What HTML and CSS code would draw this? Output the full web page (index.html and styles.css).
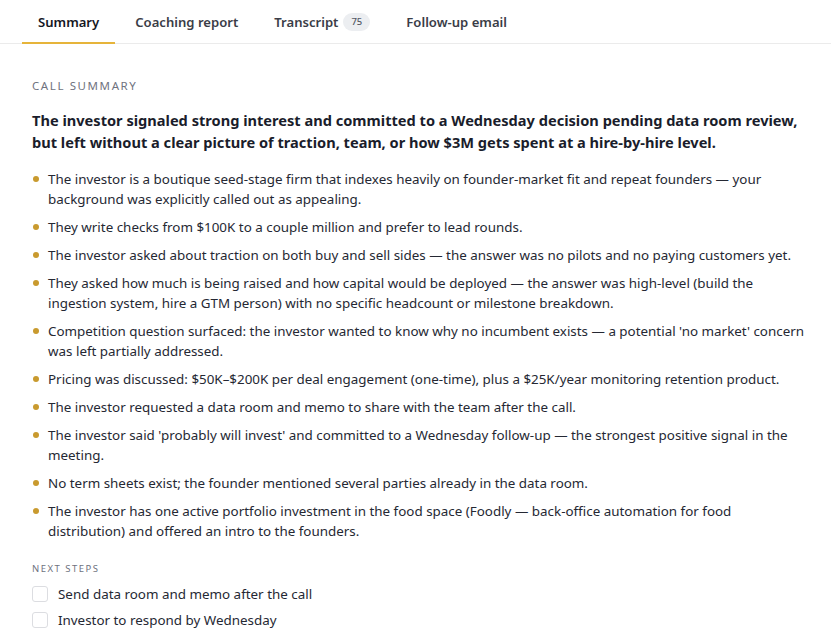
FILE: index.html
```html
<!DOCTYPE html>
<html>
<head>
    <title>Call summary</title>
    <link rel="stylesheet" href="styles.css">
</head>
<body>
<div class="tabs">
    <a class="tab active" href="#">Summary</a>
    <a class="tab" href="#">Coaching report</a>
    <a class="tab" href="#">Transcript <span class="badge">75</span></a>
    <a class="tab" href="#">Follow-up email</a>
</div>
<div class="content">
    <div class="label">Call summary</div>
    <h1 class="headline">The investor signaled strong interest and committed to a Wednesday decision pending data room review, but left without a clear picture of traction, team, or how $3M gets spent at a hire-by-hire level.</h1>
    <ul class="points">
        <li>The investor is a boutique seed-stage firm that indexes heavily on founder-market fit and repeat founders — your background was explicitly called out as appealing.</li>
        <li>They write checks from $100K to a couple million and prefer to lead rounds.</li>
        <li>The investor asked about traction on both buy and sell sides — the answer was no pilots and no paying customers yet.</li>
        <li>They asked how much is being raised and how capital would be deployed — the answer was high-level (build the ingestion system, hire a GTM person) with no specific headcount or milestone breakdown.</li>
        <li>Competition question surfaced: the investor wanted to know why no incumbent exists — a potential 'no market' concern was left partially addressed.</li>
        <li>Pricing was discussed: $50K–$200K per deal engagement (one-time), plus a $25K/year monitoring retention product.</li>
        <li>The investor requested a data room and memo to share with the team after the call.</li>
        <li>The investor said 'probably will invest' and committed to a Wednesday follow-up — the strongest positive signal in the meeting.</li>
        <li>No term sheets exist; the founder mentioned several parties already in the data room.</li>
        <li>The investor has one active portfolio investment in the food space (Foodly — back-office automation for food distribution) and offered an intro to the founders.</li>
    </ul>
    <div class="label small">Next steps</div>
    <div class="steps">
        <label class="step"><span class="check"></span>Send data room and memo after the call</label>
        <label class="step"><span class="check"></span>Investor to respond by Wednesday</label>
    </div>
</div>
</body>
</html>
```

FILE: styles.css
```css
html, body {
    margin:0;
    padding:0;
    background:#FFFFFF;
    font-family: "Noto Sans", "Open Sans", sans-serif;
    color:#1c1f2a;
}

.tabs {
    display:flex;
    gap:4px;
    padding:0 6px 0 22px;
    height:43px;
    border-bottom:1px solid #ebebeb;
}

.tab {
    display:flex;
    align-items:center;
    padding:1px 16px 0 16px;
    font-size:13.1px;
    font-weight:600;
    color:#3a3d47;
    text-decoration:none;
    border-bottom:2px solid transparent;
    margin-bottom:-1px;
}

.tab.active {
    color:#15171f;
    border-bottom-color:#e6b43a;
}

.badge {
    display:inline-block;
    margin-left:5px;
    padding:0 8px;
    height:18px;
    line-height:18px;
    border-radius:9px;
    background:#eceef1;
    color:#555a66;
    font-size:9.5px;
    font-weight:500;
}

.content {
    padding:34px 24px 0 32px;
}

.label {
    font-size:11.5px;
    letter-spacing:1.6px;
    text-transform:uppercase;
    color:#6f7380;
}

.label.small {
    font-size:9.5px;
    letter-spacing:1.5px;
    margin-top:21px;
}

.headline {
    margin:16px 0 16px 0;
    font-size:14.6px;
    line-height:22px;
    font-weight:700;
    color:#1a1d2b;
}

.points {
    list-style:none;
    margin:0;
    padding:0;
    display:flex;
    flex-direction:column;
    gap:8px;
}

.points li {
    position:relative;
    padding-left:16px;
    font-size:13.4px;
    line-height:20px;
    color:#252833;
}

.points li:before {
    content:"";
    position:absolute;
    left:1px;
    top:7px;
    width:6px;
    height:6px;
    border-radius:50%;
    background:#c99a2e;
}

.steps {
    display:flex;
    flex-direction:column;
    gap:6px;
    margin-top:9px;
}

.step {
    display:flex;
    align-items:center;
    gap:10px;
    font-size:13.4px;
    line-height:20px;
    color:#252833;
}

.check {
    width:14px;
    height:14px;
    border:1px solid #dcdde1;
    border-radius:3px;
}
```
